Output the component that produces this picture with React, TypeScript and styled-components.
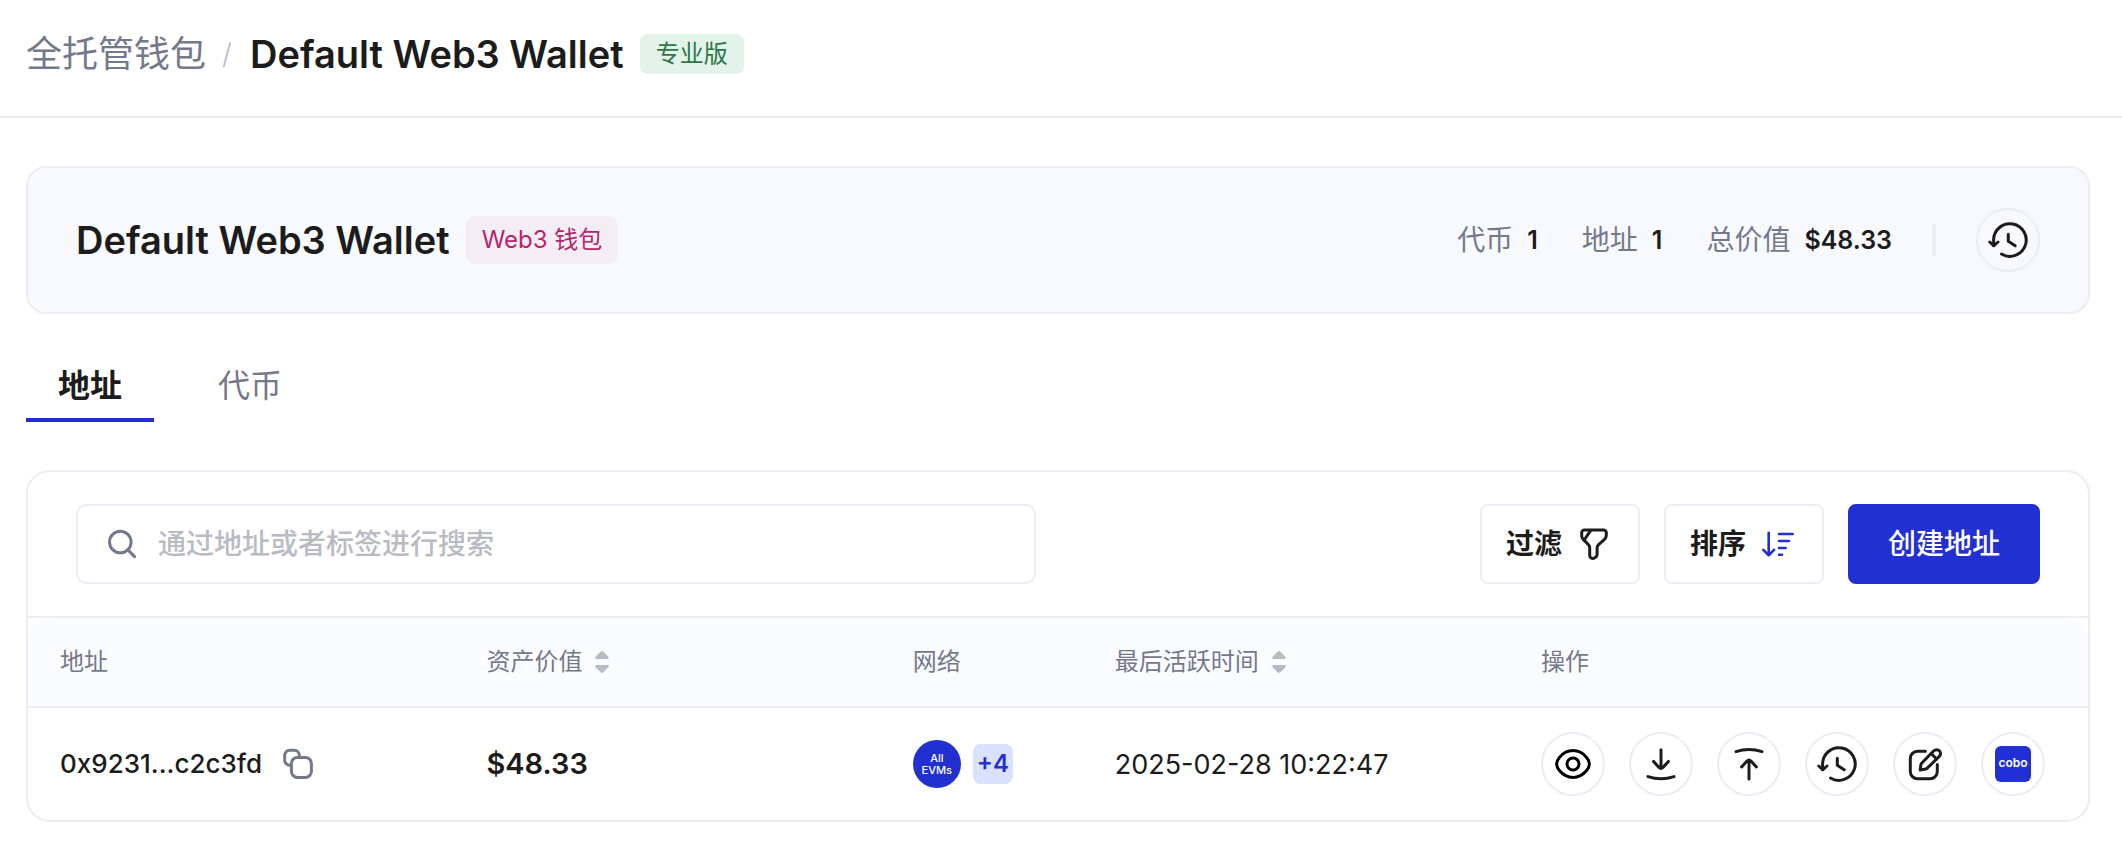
import React from "react";
import styled, { createGlobalStyle } from "styled-components";

const color = {
  ink: "#1c1c1c",
  muted: "#73798b",
  faint: "#b8bac4",
  line: "#ececf4",
  blue: "#222fd1",
};

const GlobalStyle = createGlobalStyle`
  *, *::before, *::after { box-sizing: border-box; }
  body {
    margin: 0;
    background: #fff;
    color: ${color.ink};
    font-family: Inter, "Noto Sans CJK SC", sans-serif;
    font-size: 28px;
    line-height: 40px;
  }
  button, input { font: inherit; color: inherit; }
  button { cursor: pointer; }
  h1, h2, dl, dt, dd { margin: 0; }
`;

const Header = styled.header`
  display: flex;
  align-items: center;
  gap: 16px;
  padding: 28px 32px 36px 26px;
  border-bottom: 2px solid ${color.line};
`;

const Breadcrumb = styled.nav`
  display: flex;
  align-items: center;
  gap: 16px;
`;

const CrumbLink = styled.a`
  font-size: 36px;
  line-height: 52px;
  color: ${color.muted};
  text-decoration: none;
`;

const Slash = styled.span`
  width: 12px;
  color: ${color.faint};
  font-weight: 300;
`;

const Title = styled.h1`
  font-size: 38px;
  line-height: 52px;
  font-weight: 600;
`;

const Tag = styled.span<{ $tone: "green" | "pink" }>`
  padding: ${(p) => (p.$tone === "green" ? "4px 16px" : "8px 16px")};
  border-radius: ${(p) => (p.$tone === "green" ? "8px" : "10px")};
  background: ${(p) => (p.$tone === "green" ? "#e4f3ea" : "#f4eef4")};
  color: ${(p) => (p.$tone === "green" ? "#2b7748" : "#b4256d")};
  font-size: 24px;
  line-height: 32px;
`;

const Main = styled.main`
  padding: 48px 32px 32px 26px;
`;

const Summary = styled.section`
  display: flex;
  align-items: center;
  justify-content: space-between;
  padding: 40px 48px;
  border: 2px solid ${color.line};
  border-radius: 20px;
  background: #f8f9fd;
`;

const WalletName = styled.div`
  display: flex;
  align-items: center;
  gap: 16px;
`;

const SummarySide = styled.div`
  display: flex;
  align-items: center;
  gap: 40px;
`;

const Stats = styled.dl`
  display: flex;
  gap: 44px;
`;

const Stat = styled.div`
  display: flex;
  gap: 14px;
`;

const StatLabel = styled.dt`
  color: ${color.muted};
`;

const StatValue = styled.dd`
  font-size: 25px;
  font-weight: 600;
`;

const Divider = styled.span`
  width: 4px;
  height: 32px;
  background: ${color.line};
`;

const RoundButton = styled.button`
  display: flex;
  flex: none;
  align-items: center;
  justify-content: center;
  width: 64px;
  height: 64px;
  padding: 0;
  border: 2px solid ${color.line};
  border-radius: 50%;
  background: transparent;
`;

const Tabs = styled.div`
  display: flex;
  gap: 32px;
  margin: 32px 0 48px;
`;

const Tab = styled.button<{ $active?: boolean }>`
  padding: 20px 32px 12px;
  border: 0;
  border-bottom: 4px solid ${(p) => (p.$active ? color.blue : "transparent")};
  background: none;
  font-size: 32px;
  font-weight: ${(p) => (p.$active ? 700 : 400)};
  color: ${(p) => (p.$active ? color.ink : color.muted)};
`;

const Panel = styled.section`
  border: 2px solid ${color.line};
  border-radius: 24px;
`;

const Toolbar = styled.div`
  display: flex;
  align-items: center;
  justify-content: space-between;
  gap: 24px;
  padding: 32px 48px;
  border-bottom: 2px solid ${color.line};
`;

const SearchBox = styled.label`
  display: flex;
  flex: 0 1 960px;
  align-items: center;
  gap: 20px;
  height: 80px;
  padding: 0 28px;
  border: 2px solid ${color.line};
  border-radius: 10px;
`;

const SearchInput = styled.input`
  flex: 1;
  min-width: 0;
  padding: 0;
  border: 0;
  outline: 0;
  background: none;
  &::placeholder {
    color: ${color.faint};
    font-weight: 500;
    opacity: 1;
  }
`;

const ToolbarActions = styled.div`
  display: flex;
  gap: 24px;
`;

const ToolButton = styled.button<{ $primary?: boolean }>`
  display: flex;
  align-items: center;
  gap: 16px;
  min-width: 160px;
  height: 80px;
  padding: 0 ${(p) => (p.$primary ? "38px" : "24px")};
  border: 2px solid ${(p) => (p.$primary ? color.blue : color.line)};
  border-radius: 8px;
  background: ${(p) => (p.$primary ? color.blue : "#fff")};
  color: ${(p) => (p.$primary ? "#fff" : color.ink)};
  font-weight: ${(p) => (p.$primary ? 500 : 700)};
  white-space: nowrap;
`;

const Table = styled.table`
  width: 100%;
  table-layout: fixed;
  border-collapse: separate;
  border-spacing: 0;
`;

const HeadCell = styled.th<{ $width?: string }>`
  width: ${(p) => p.$width || "auto"};
  height: 90px;
  padding: 0 32px;
  border-bottom: 2px solid ${color.line};
  background: #fbfcff;
  color: ${color.muted};
  font-size: 24px;
  font-weight: 400;
  text-align: left;
  &:first-child { border-top-left-radius: 24px; }
  &:last-child { border-top-right-radius: 24px; }
`;

const SortHeader = styled.button`
  display: flex;
  align-items: center;
  gap: 12px;
  padding: 0;
  border: 0;
  background: none;
`;

const Cell = styled.td`
  height: 112px;
  padding: 0 32px;
`;

const Inline = styled.div<{ $gap: number }>`
  display: flex;
  align-items: center;
  gap: ${(p) => p.$gap}px;
`;

const Address = styled.span`
  font-size: 26px;
  font-weight: 500;
`;

const Amount = styled.span`
  font-size: 29px;
  font-weight: 600;
`;

const Timestamp = styled.time`
  font-size: 27px;
`;

const IconButton = styled.button`
  display: flex;
  padding: 0;
  border: 0;
  background: none;
`;

const NetworkBadge = styled.span`
  display: flex;
  flex: none;
  align-items: center;
  justify-content: center;
  width: 48px;
  height: 48px;
  border-radius: 50%;
  background: ${color.blue};
  color: #fff;
  font-size: 11px;
  font-weight: 500;
  line-height: 12px;
  text-align: center;
`;

const MoreBadge = styled.span`
  width: 40px;
  border-radius: 8px;
  background: #dae1fd;
  color: ${color.blue};
  font-size: 24px;
  font-weight: 600;
  text-align: center;
`;

const CoboMark = styled.span`
  width: 36px;
  height: 36px;
  border-radius: 6px;
  background: #2030d6;
  color: #fff;
  font-size: 12px;
  font-weight: 600;
  line-height: 34px;
  text-align: center;
`;

type IconProps = {
  size: number;
  stroke?: string;
  weight?: number;
  children: React.ReactNode;
};

const Icon = ({ size, stroke = color.ink, weight = 3, children }: IconProps) => (
  <svg
    width={size}
    height={size}
    viewBox={`0 0 ${size} ${size}`}
    fill="none"
    stroke={stroke}
    strokeWidth={weight}
    strokeLinecap="round"
    strokeLinejoin="round"
    aria-hidden="true"
  >
    {children}
  </svg>
);

const HistoryIcon = () => (
  <Icon size={40}>
    <path d="M5.6 25.5V20A16.3 16.3 0 1 1 13.5 34" />
    <path d="M1.8 22L5.7 25.8L10 22" />
    <path d="M20.3 14.2V21.3L27.2 25.8" />
  </Icon>
);

const EyeIcon = () => (
  <Icon size={36} stroke="#000">
    <path d="M1.6 18C1.6 15.4 2.8 13.4 4.4 11.5C8.2 7 12.6 4.6 18 4.6S27.8 7 31.6 11.5C33.2 13.4 34.4 15.4 34.4 18S33.2 22.6 31.6 24.5C27.8 29 23.4 31.4 18 31.4S8.2 29 4.4 24.5C2.8 22.6 1.6 20.6 1.6 18Z" />
    <circle cx="18" cy="18" r="6" />
  </Icon>
);

const DepositIcon = () => (
  <Icon size={36}>
    <path d="M18 3.8V22.5M10.6 15.4L15.8 21.2Q18 23.4 20.2 21.2L25.4 15.4" />
    <path d="M5 30.6Q18 34.8 31 30.6" />
  </Icon>
);

const WithdrawIcon = () => (
  <Icon size={36}>
    <path d="M18 33V14M10.6 21L15.8 15.2Q18 13 20.2 15.2L25.4 21" />
    <path d="M5 5.6Q18 1.4 31 5.6" />
  </Icon>
);

const EditIcon = () => (
  <Icon size={40}>
    <path d="M20.4 7.3H12.5A7.2 7.2 0 0 0 5.3 14.5V27.5A7.2 7.2 0 0 0 12.5 34.7H25.1A7.2 7.2 0 0 0 32.3 27.5V20.4" />
    <path d="M15.2 26L15.9 20.6Q16 19.8 16.6 19.2L28.8 6.8A3.9 3.9 0 0 1 34.4 12.3L22 24.4Q21.4 25 20.6 25.1Z" />
    <path d="M26.2 9.5L31.6 15" />
  </Icon>
);

const CopyIcon = () => (
  <Icon size={32} stroke={color.muted}>
    <rect x="9.4" y="9.4" width="20" height="20" rx="6" />
    <path d="M17.3 8.8V7.3A5 5 0 0 0 12.3 2.3H7.7A5 5 0 0 0 2.7 7.3V12.2A5 5 0 0 0 7.7 17.2H8.8" />
  </Icon>
);

const SearchIcon = () => (
  <Icon size={32} stroke={color.muted}>
    <circle cx="14.3" cy="14" r="10.8" />
    <path d="M22 22L28.6 28.6" />
  </Icon>
);

const FilterIcon = () => (
  <Icon size={32}>
    <path d="M6.4 2H25.6A2.7 2.7 0 0 1 28.3 4.7V7.6C28.3 9 27.4 10.5 26.5 11.4L20.6 16.6C19.7 17.4 19.1 18.7 19.1 19.8V26.6C19.1 27.6 18.5 28.8 17.6 29.3L16.1 30.1C14.2 31 11.7 29.8 11.7 27.4V19.6C11.7 18.7 11.1 17.5 10.5 16.8L5.3 11.4C4.5 10.6 3.7 9.2 3.7 8.2V4.8A2.7 2.7 0 0 1 6.4 2Z" />
    <path d="M12.7 2.4L6.2 12" />
  </Icon>
);

const SortIcon = () => (
  <Icon size={32} stroke={color.blue} weight={2.6}>
    <path d="M6.7 4.8V27.3M1.4 21.8L6.7 27.3L12 21.8" />
    <path d="M17 6H30.7M17 13H27M17 20H23.6M17 26.8H20" />
  </Icon>
);

const SortCarets = () => (
  <svg width="16" height="24" viewBox="0 0 16 24" fill={color.faint} aria-hidden="true">
    <path d="M6.9 1.5Q8 .6 9.1 1.5L14.4 6.8Q15.4 9 13.6 9H2.4Q.6 9 1.6 6.8Z" />
    <path d="M6.9 22.5Q8 23.4 9.1 22.5L14.4 17.2Q15.4 15 13.6 15H2.4Q.6 15 1.6 17.2Z" />
  </svg>
);

const stats = [
  { label: "代币", value: "1" },
  { label: "地址", value: "1" },
  { label: "总价值", value: "$48.33" },
];

const actions = [
  { label: "查看", icon: <EyeIcon /> },
  { label: "充值", icon: <DepositIcon /> },
  { label: "提现", icon: <WithdrawIcon /> },
  { label: "历史记录", icon: <HistoryIcon /> },
  { label: "编辑", icon: <EditIcon /> },
  { label: "Cobo", icon: <CoboMark>cobo</CoboMark> },
];

export default function App() {
  return (
    <>
      <GlobalStyle />
      <Header>
        <Breadcrumb>
          <CrumbLink href="#wallets">全托管钱包</CrumbLink>
          <Slash>/</Slash>
          <Title>Default Web3 Wallet</Title>
        </Breadcrumb>
        <Tag $tone="green">专业版</Tag>
      </Header>
      <Main>
        <Summary>
          <WalletName>
            <Title as="h2">Default Web3 Wallet</Title>
            <Tag $tone="pink">Web3 钱包</Tag>
          </WalletName>
          <SummarySide>
            <Stats>
              {stats.map((s) => (
                <Stat key={s.label}>
                  <StatLabel>{s.label}</StatLabel>
                  <StatValue>{s.value}</StatValue>
                </Stat>
              ))}
            </Stats>
            <Divider />
            <RoundButton aria-label="历史记录">
              <HistoryIcon />
            </RoundButton>
          </SummarySide>
        </Summary>
        <Tabs role="tablist">
          <Tab role="tab" aria-selected="true" $active>
            地址
          </Tab>
          <Tab role="tab" aria-selected="false">
            代币
          </Tab>
        </Tabs>
        <Panel>
          <Toolbar>
            <SearchBox>
              <SearchIcon />
              <SearchInput
                type="text"
                aria-label="搜索"
                placeholder="通过地址或者标签进行搜索"
              />
            </SearchBox>
            <ToolbarActions>
              <ToolButton>
                过滤
                <FilterIcon />
              </ToolButton>
              <ToolButton>
                排序
                <SortIcon />
              </ToolButton>
              <ToolButton $primary>创建地址</ToolButton>
            </ToolbarActions>
          </Toolbar>
          <Table>
            <thead>
              <tr>
                <HeadCell $width="20.7%">地址</HeadCell>
                <HeadCell $width="20.7%">
                  <SortHeader>
                    资产价值
                    <SortCarets />
                  </SortHeader>
                </HeadCell>
                <HeadCell $width="9.8%">网络</HeadCell>
                <HeadCell $width="20.7%">
                  <SortHeader>
                    最后活跃时间
                    <SortCarets />
                  </SortHeader>
                </HeadCell>
                <HeadCell>操作</HeadCell>
              </tr>
            </thead>
            <tbody>
              <tr>
                <Cell>
                  <Inline $gap={20}>
                    <Address>0x9231...c2c3fd</Address>
                    <IconButton aria-label="复制地址">
                      <CopyIcon />
                    </IconButton>
                  </Inline>
                </Cell>
                <Cell>
                  <Amount>$48.33</Amount>
                </Cell>
                <Cell>
                  <Inline $gap={12}>
                    <NetworkBadge>
                      All
                      <br />
                      EVMs
                    </NetworkBadge>
                    <MoreBadge>+4</MoreBadge>
                  </Inline>
                </Cell>
                <Cell>
                  <Timestamp>2025-02-28 10:22:47</Timestamp>
                </Cell>
                <Cell>
                  <Inline $gap={24}>
                    {actions.map((a) => (
                      <RoundButton key={a.label} aria-label={a.label}>
                        {a.icon}
                      </RoundButton>
                    ))}
                  </Inline>
                </Cell>
              </tr>
            </tbody>
          </Table>
        </Panel>
      </Main>
    </>
  );
}
